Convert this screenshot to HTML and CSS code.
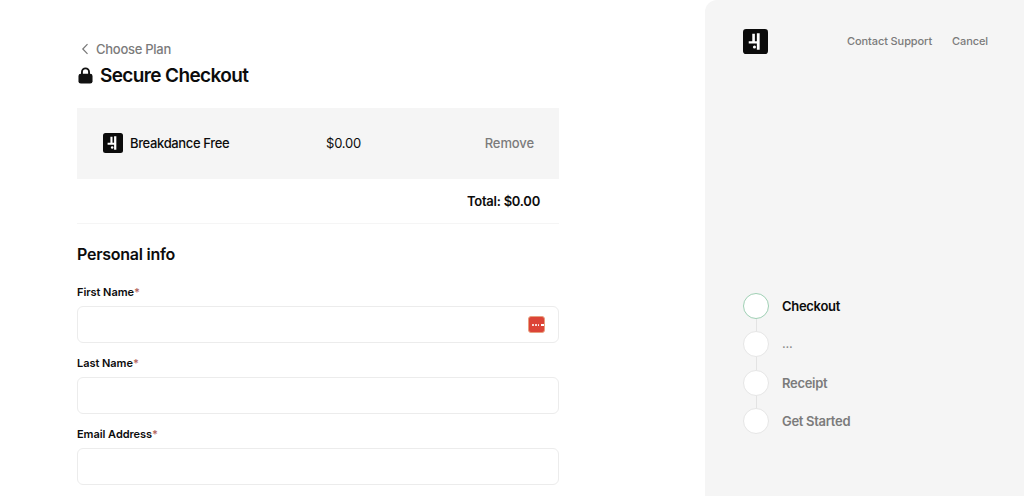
FILE: index.html
```html
<!DOCTYPE html>
<html lang="en">
<head>
<meta charset="utf-8">
<title>Secure Checkout</title>
<link rel="stylesheet" href="styles.css">
</head>
<body>
<main class="main">
  <a class="back" href="#">
    <svg class="back-icon" viewBox="0 0 8 12" width="8" height="12"><path d="M6.5 1.2 1.8 6l4.7 4.8" fill="none" stroke="#777" stroke-width="1.2"/></svg>
    <span>Choose Plan</span>
  </a>
  <h1 class="title">
    <svg class="lock" viewBox="0 0 16 18" width="15" height="17"><path d="M4.2 8V5.2a3.8 3.8 0 0 1 7.6 0V8" fill="none" stroke="#111" stroke-width="2"/><rect x="0.5" y="7" width="15" height="10.5" rx="2.5" fill="#111"/></svg>
    <span>Secure Checkout</span>
  </h1>
  <section class="item">
    <div class="item-name">
      <svg class="logo logo-sm" viewBox="0 0 24 24"><use href="#logo-mark"/></svg>
      <span>Breakdance Free</span>
    </div>
    <div class="item-price">$0.00</div>
    <a class="item-remove" href="#">Remove</a>
  </section>
  <div class="total">Total: $0.00</div>
  <h2 class="section-title">Personal info</h2>
  <form class="form">
    <div class="field">
      <label class="label">First Name<span class="req">*</span></label>
      <div class="input has-badge">
        <span class="pw-badge"><i></i><i></i><i></i><b></b></span>
      </div>
    </div>
    <div class="field">
      <label class="label">Last Name<span class="req">*</span></label>
      <div class="input"></div>
    </div>
    <div class="field">
      <label class="label">Email Address<span class="req">*</span></label>
      <div class="input"></div>
    </div>
  </form>
</main>
<aside class="side">
  <header class="side-head">
    <svg class="logo" viewBox="0 0 24 24">
      <defs>
        <g id="logo-mark">
          <rect width="24" height="24" rx="3" fill="#0b0b0b"/>
          <path d="M13.3 4h2.7v16h-2.7v-6H5.5v-2.2h3.4V4.500h2.500v7.300h1.900z" fill="#fff"/>
          <circle cx="11" cy="17.300" r="1.500" fill="#fff"/>
        </g>
      </defs>
      <use href="#logo-mark"/>
    </svg>
    <nav class="side-nav">
      <a href="#">Contact Support</a>
      <a href="#">Cancel</a>
    </nav>
  </header>
  <ol class="steps">
    <li class="step active"><span class="dot"></span><span>Checkout</span></li>
    <li class="step"><span class="dot"></span><span class="ellipsis">...</span></li>
    <li class="step"><span class="dot"></span><span>Receipt</span></li>
    <li class="step"><span class="dot"></span><span>Get Started</span></li>
  </ol>
</aside>
</body>
</html>
```
FILE: styles.css
```css
* { box-sizing: border-box; }
html, body { margin: 0; height: 496px; overflow: hidden; }
body {
  display: flex;
  background: #fff;
  font-family: Inter, "Liberation Sans", sans-serif;
  color: #0c0c0c;
}
a { color: inherit; text-decoration: none; }

.main { width: 705px; flex: none; padding: 41px 0 0 77px; }
.main > * { width: 482px; }

.back {
  display: flex;
  align-items: center;
  gap: 7px;
  height: 16px;
  padding-left: 4px;
  font-size: 13px;
  font-weight: 500;
  letter-spacing: -0.27px;
  color: #7b7b7b;
}
.back-icon { margin-top: -1px; }

.title {
  display: flex;
  align-items: center;
  gap: 7px;
  height: 26px;
  margin: 5px 0 0 1px;
  font-size: 19px;
  font-weight: 600;
  letter-spacing: -0.62px;
}

.item {
  display: grid;
  grid-template-columns: 224px 1fr auto;
  align-items: center;
  height: 71px;
  margin-top: 20px;
  padding: 0 25px 1px;
  background: #f5f5f5;
  font-size: 13px;
  letter-spacing: -0.2px;
}
.item-name { display: flex; align-items: center; gap: 7px; font-weight: 500; letter-spacing: -0.36px; }
.item-remove { font-weight: 500; color: #7b7b7b; letter-spacing: -0.1px; }
.logo { width: 25px; height: 25px; display: block; }
.logo-sm { width: 20px; height: 20px; margin-left: 1px; }

.total {
  height: 45px;
  padding: 14px 19px 0 0;
  border-bottom: 1px solid #f5f5f5;
  text-align: right;
  font-size: 13px;
  font-weight: 600;
  letter-spacing: -0.25px;
}

.section-title {
  margin: 20px 0 0;
  height: 20px;
  line-height: 20px;
  font-size: 16px;
  font-weight: 600;
  letter-spacing: -0.25px;
}

.form { display: flex; flex-direction: column; gap: 13px; margin-top: 21px; }
.label {
  display: block;
  height: 15px;
  line-height: 15px;
  font-size: 11px;
  font-weight: 600;
  letter-spacing: -0.05px;
}
.req { color: #b5695f; }
.input {
  display: flex;
  align-items: center;
  justify-content: flex-end;
  height: 37px;
  margin-top: 6px;
  padding-right: 13px;
  background: #fff;
  border: 1px solid #ececec;
  border-radius: 6px;
}
.pw-badge {
  display: flex;
  align-items: center;
  gap: 1px;
  width: 17px;
  height: 17px;
  padding-left: 3px;
  background: #dc4437;
  border: 1px solid #e8a080;
  border-radius: 3px;
}
.pw-badge i { width: 2px; height: 2px; background: #fff; border-radius: 50%; }
.pw-badge b { width: 3px; height: 2px; margin-left: 1px; background: #fff; }

.side {
  width: 319px;
  flex: none;
  display: flex;
  flex-direction: column;
  padding: 29px 36px 0 38px;
  background: #f5f5f5;
  border-top-left-radius: 12px;
}
.side-head { display: flex; justify-content: space-between; align-items: center; height: 24px; }
.side-nav { display: flex; gap: 20px; font-size: 11px; font-weight: 500; letter-spacing: -0.1px; color: #7b7b7b; }

.steps {
  list-style: none;
  margin: 240px 0 0;
  padding: 0;
  display: flex;
  flex-direction: column;
  gap: 12.4px;
}
.step {
  position: relative;
  display: flex;
  align-items: center;
  gap: 13px;
  height: 26px;
  font-size: 13px;
  font-weight: 600;
  letter-spacing: -0.3px;
  color: #7b7b7b;
}
.step.active { color: #0c0c0c; }
.ellipsis { font-weight: 400; margin-top: -3px; color: #8a8a8a; }
.dot {
  width: 26px;
  height: 26px;
  flex: none;
  background: #fff;
  border: 1px solid #e6e6e6;
  border-radius: 50%;
}
.step.active .dot { border-color: #9fd0b4; }
.step:not(:last-child)::after {
  content: "";
  position: absolute;
  left: 13px;
  top: 26px;
  width: 1px;
  height: 13px;
  background: #e3e3e3;
}
```
